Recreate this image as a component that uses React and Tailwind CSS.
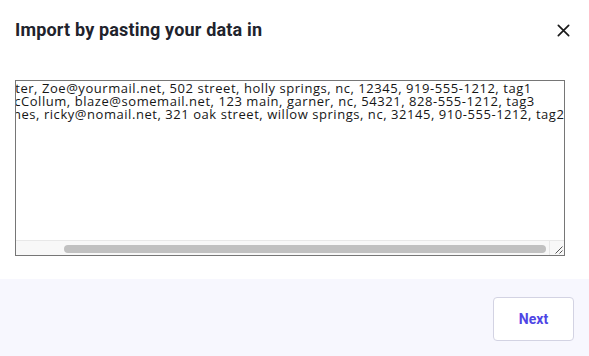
import { useEffect, useRef } from 'react';

const DATA = [
  'Zoe Baxter, Zoe@yourmail.net, 502 street, holly springs, nc, 12345, 919-555-1212, tag1',
  'Blaze McCollum, blaze@somemail.net, 123 main, garner, nc, 54321, 828-555-1212, tag3',
  'Ricky Jones, ricky@nomail.net, 321 oak street, willow springs, nc, 32145, 910-555-1212, tag2',
].join('\n');

export default function App() {
  const ref = useRef(null);

  useEffect(() => {
    if (ref.current) ref.current.scrollLeft = ref.current.scrollWidth;
  }, []);

  return (
    <div className="w-[589px] h-[356px] bg-white flex flex-col font-['Liberation_Sans',sans-serif]">
      {/* Header */}
      <div className="flex items-center justify-between pl-[15px] pr-[18px] pt-[19px] pb-[21px]">
        <h2 className="text-[18px] leading-[22px] font-bold text-[#21232c] font-['Roboto',sans-serif] tracking-[0.17px]">
          Import by pasting your data in
        </h2>
        <button className="text-[#1a1a1a]">
          <svg width="15" height="15" viewBox="0 0 16 16" fill="none" stroke="currentColor" strokeWidth="1.8" strokeLinecap="round">
            <path d="M2.5 2.5l11 11M13.5 2.5l-11 11" />
          </svg>
        </button>
      </div>

      {/* Body */}
      <div className="px-[15px] mt-[18px]">
        <div className="relative w-[550px]">
          <textarea
            ref={ref}
            wrap="off"
            defaultValue={DATA}
            className="block w-[550px] h-[176px] border border-[#767676] bg-white pl-[1px] pt-px text-[13px] leading-[13px] tracking-[0.55px] text-[#161616] font-['Open_Sans',sans-serif] outline-none [scrollbar-width:none]"
          />
          {/* horizontal scrollbar */}
          <div className="absolute left-px bottom-px w-[533px] h-[15px] bg-[#f8f8f8] border-t border-[#e8e8e8] pointer-events-none">
            <div className="absolute left-[48px] top-[4px] w-[482px] h-[8px] rounded-full bg-[#c1c1c1]" />
          </div>
          <div className="absolute right-px bottom-px w-[15px] h-[15px] bg-[#f8f8f8] border-t border-l border-[#e8e8e8] pointer-events-none">
            <svg width="14" height="14" viewBox="0 0 14 14" className="absolute right-0 bottom-0">
              <path d="M12.5 5.5l-7 7M12.5 9.5l-3 3" stroke="#555" strokeWidth="1" />
            </svg>
          </div>
        </div>
      </div>

      {/* Footer */}
      <div className="mt-auto h-[77px] bg-[#f7f7fe] flex items-start justify-end pt-[18px] pr-[15px]">
        <button className="w-[81px] h-[44px] bg-white border border-[#d3d3e3] rounded-[4px] text-[14px] font-bold text-[#4f46e5] font-['Roboto',sans-serif]">
          Next
        </button>
      </div>
    </div>
  );
}
